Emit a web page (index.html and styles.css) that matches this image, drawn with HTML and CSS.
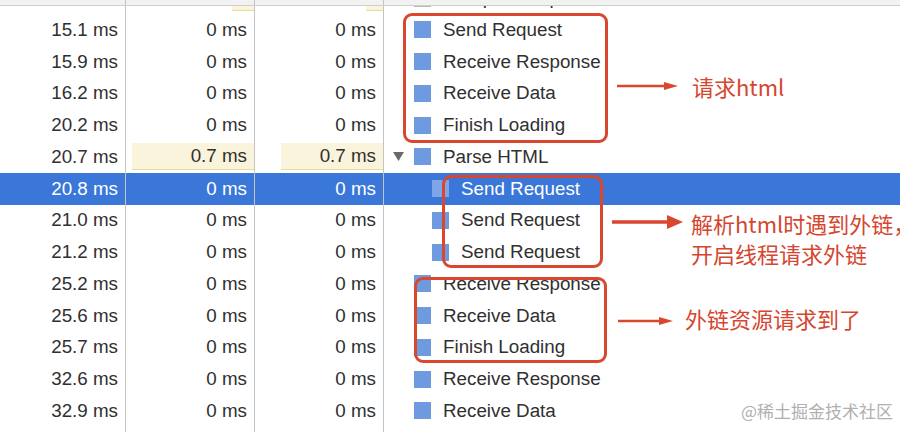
FILE: index.html
```html
<!DOCTYPE html>
<html lang="zh">
<head>
<meta charset="utf-8">
<title>Timeline</title>
<link rel="stylesheet" href="styles.css">
</head>
<body>
<div class="page">
  <div class="table">
    <div class="row header">
      <div class="cell"></div><div class="cell"></div><div class="cell"></div><div class="cell last"></div>
    </div>
    <div class="rows">
      <div class="row">
        <div class="cell num"></div>
        <div class="cell num bar-cell"><div class="bar" style="width:22px"></div></div>
        <div class="cell num bar-cell"><div class="bar" style="width:17px"></div></div>
        <div class="cell name last"><span class="twisty"></span><span class="sq sq-script"></span>Compile Script</div>
      </div>
      <div class="row">
        <div class="cell num">15.1 ms</div><div class="cell num">0 ms</div><div class="cell num">0 ms</div>
        <div class="cell name last"><span class="twisty"></span><span class="sq"></span>Send Request</div>
      </div>
      <div class="row">
        <div class="cell num">15.9 ms</div><div class="cell num">0 ms</div><div class="cell num">0 ms</div>
        <div class="cell name last"><span class="twisty"></span><span class="sq"></span>Receive Response</div>
      </div>
      <div class="row">
        <div class="cell num">16.2 ms</div><div class="cell num">0 ms</div><div class="cell num">0 ms</div>
        <div class="cell name last"><span class="twisty"></span><span class="sq"></span>Receive Data</div>
      </div>
      <div class="row">
        <div class="cell num">20.2 ms</div><div class="cell num">0 ms</div><div class="cell num">0 ms</div>
        <div class="cell name last"><span class="twisty"></span><span class="sq"></span>Finish Loading</div>
      </div>
      <div class="row">
        <div class="cell num">20.7 ms</div>
        <div class="cell num bar-cell"><div class="bar" style="width:122px">0.7 ms</div></div>
        <div class="cell num bar-cell"><div class="bar" style="width:102px">0.7 ms</div></div>
        <div class="cell name last"><span class="twisty"><svg width="11" height="9" viewBox="0 0 11 9"><polygon points="0,0 11,0 5.5,9" fill="#6a6a6a"/></svg></span><span class="sq"></span>Parse HTML</div>
      </div>
      <div class="row selected">
        <div class="cell num">20.8 ms</div><div class="cell num">0 ms</div><div class="cell num">0 ms</div>
        <div class="cell name last"><span class="twisty"></span><span class="indent"></span><span class="sq"></span>Send Request</div>
      </div>
      <div class="row">
        <div class="cell num">21.0 ms</div><div class="cell num">0 ms</div><div class="cell num">0 ms</div>
        <div class="cell name last"><span class="twisty"></span><span class="indent"></span><span class="sq"></span>Send Request</div>
      </div>
      <div class="row">
        <div class="cell num">21.2 ms</div><div class="cell num">0 ms</div><div class="cell num">0 ms</div>
        <div class="cell name last"><span class="twisty"></span><span class="indent"></span><span class="sq"></span>Send Request</div>
      </div>
      <div class="row">
        <div class="cell num">25.2 ms</div><div class="cell num">0 ms</div><div class="cell num">0 ms</div>
        <div class="cell name last"><span class="twisty"></span><span class="sq"></span>Receive Response</div>
      </div>
      <div class="row">
        <div class="cell num">25.6 ms</div><div class="cell num">0 ms</div><div class="cell num">0 ms</div>
        <div class="cell name last"><span class="twisty"></span><span class="sq"></span>Receive Data</div>
      </div>
      <div class="row">
        <div class="cell num">25.7 ms</div><div class="cell num">0 ms</div><div class="cell num">0 ms</div>
        <div class="cell name last"><span class="twisty"></span><span class="sq"></span>Finish Loading</div>
      </div>
      <div class="row">
        <div class="cell num">32.6 ms</div><div class="cell num">0 ms</div><div class="cell num">0 ms</div>
        <div class="cell name last"><span class="twisty"></span><span class="sq"></span>Receive Response</div>
      </div>
      <div class="row">
        <div class="cell num">32.9 ms</div><div class="cell num">0 ms</div><div class="cell num">0 ms</div>
        <div class="cell name last"><span class="twisty"></span><span class="sq"></span>Receive Data</div>
      </div>
      <div class="row">
        <div class="cell num"></div><div class="cell num"></div><div class="cell num"></div><div class="cell name last"></div>
      </div>
    </div>
  </div>

  <div class="overlay">
    <div class="box box1"></div>
    <div class="box box2"></div>
    <div class="box box3"></div>
    <svg class="arrows" width="900" height="432" viewBox="0 0 900 432">
      <line x1="617" y1="86" x2="667" y2="86" stroke="#d9472f" stroke-width="2.5"/>
      <polygon points="664,82 678,86 664,90" fill="#d9472f"/>
      <line x1="612" y1="222" x2="670" y2="222" stroke="#d9472f" stroke-width="3.5"/>
      <polygon points="667,215 683,222 667,229" fill="#d9472f"/>
      <line x1="618" y1="321" x2="662" y2="321" stroke="#d9472f" stroke-width="2.5"/>
      <polygon points="659,317 673,321 659,325" fill="#d9472f"/>
    </svg>
    <div class="note note1">请求html</div>
    <div class="note note2">解析html时遇到外链，<br>开启线程请求外链</div>
    <div class="note note3">外链资源请求到了</div>
  </div>

  <div class="watermark">@稀土掘金技术社区</div>
</div>
</body>
</html>
```

FILE: styles.css
```css
* { box-sizing: border-box; }

html, body {
  margin: 0;
  padding: 0;
  background: #ffffff;
}

body {
  width: 900px;
  height: 432px;
  overflow: hidden;
  font-family: "Liberation Sans", Arial, Helvetica, sans-serif;
}

.page {
  position: relative;
  width: 900px;
  height: 432px;
  overflow: hidden;
}

.table {
  display: flex;
  flex-direction: column;
  height: 100%;
}

.row {
  display: grid;
  grid-template-columns: 126px 129px 129px 1fr;
  height: 31.75px;
  font-size: 18.8px;
  color: #303030;
}

.header {
  height: 6px;
  flex: none;
  background: #f2f2f2;
  border-bottom: 1px solid #cfcfcf;
}

.rows {
  flex: 1;
  display: block;
  overflow: hidden;
}

.rows .row:first-child {
  margin-top: -23.75px;
}

.cell {
  border-right: 1px solid #c4c4c4;
  min-width: 0;
  white-space: nowrap;
}

.cell.last {
  border-right: none;
}

.num {
  display: flex;
  align-items: center;
  justify-content: flex-end;
  padding-right: 7px;
}

.bar-cell {
  padding-right: 0;
  align-items: flex-start;
}

.bar {
  margin-top: 2px;
  height: 27px;
  background: #faf4dc;
  border-bottom: 1px solid #e6dc9c;
  display: flex;
  align-items: center;
  justify-content: flex-end;
  padding-right: 7px;
  overflow: hidden;
}

.name {
  display: flex;
  align-items: center;
  padding-left: 9px;
}

.twisty {
  width: 21px;
  flex: none;
  display: flex;
  align-items: center;
}

.indent {
  width: 18px;
  flex: none;
}

.sq {
  width: 17px;
  height: 17px;
  flex: none;
  background: #6e9be0;
  margin-right: 12px;
}

.sq-script {
  background: #b9bfa3;
}

.selected {
  background: #3a77d8;
  color: #ffffff;
}

.selected .sq {
  background: #7ea6e6;
}

/* annotations */
.overlay {
  position: absolute;
  inset: 0;
  pointer-events: none;
}

.arrows {
  position: absolute;
  left: 0;
  top: 0;
}

.box {
  position: absolute;
  border: 3px solid #d9472f;
  border-radius: 9px;
}

.box1 { left: 403px; top: 13px; width: 205px; height: 130px; }
.box2 { left: 442px; top: 175px; width: 161px; height: 93px; }
.box3 { left: 414px; top: 277px; width: 193px; height: 86px; }

.note {
  position: absolute;
  font-family: "Noto Sans CJK SC", "Noto Sans", sans-serif;
  font-size: 22px;
  line-height: 30px;
  color: #d5462f;
  white-space: nowrap;
}

.note1 { left: 692px; top: 71px; }
.note2 { left: 691px; top: 208px; }
.note3 { left: 685px; top: 303px; }

.watermark {
  position: absolute;
  right: 7px;
  top: 399px;
  font-family: "Noto Sans CJK SC", sans-serif;
  font-size: 17px;
  line-height: 24px;
  color: #b0b0b0;
}
```
